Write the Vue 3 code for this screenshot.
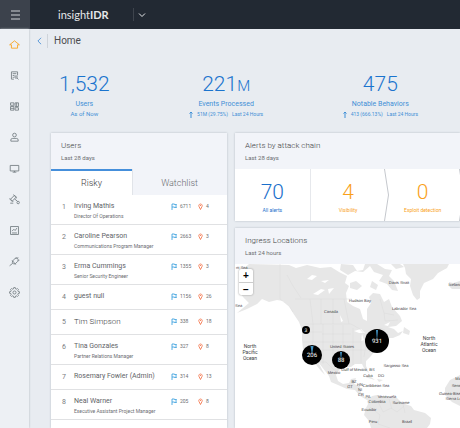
<script setup>
import { ref } from 'vue'

const tab = ref('risky')

const navItems = [
  { label: 'Home', active: true, paths: ['M0 8.500 8 2l8 6.500h-3V14H3V8.500z'] },
  { label: 'Log search', paths: ['M7 14H3V2h10v6', 'M5 5h6M5 8h3M5 11h2', 'M12.500 10.500a2 2 0 1 1-4 0 2 2 0 1 1 4 0', 'M12 12l2.500 2.500'] },
  { label: 'Dashboards', paths: ['M1.500 2H7v4H1.500zM9 2h5.500v6H9zM1.500 8H7v6H1.500zM9 10h5.500v4H9z', 'M2 11h5M11.500 2v6'] },
  { label: 'Users', paths: ['M11 4a3 3 0 1 1-6 0 3 3 0 1 1 6 0', 'M2 14v-2q0-2.500 3-2.500h6q3 0 3 2.500v2z'] },
  { label: 'Assets', paths: ['M1 3h14v9H1z', 'M8 12v2M5 14h6'] },
  { label: 'Investigations', paths: ['M1 8l7-7 3 3-7 7z', 'M6 0l6 6M0 6l6 6', 'M8 7l5 4', 'M16 13a2 2 0 1 1-4 0 2 2 0 1 1 4 0', 'M1 14h5'] },
  { label: 'Reports', paths: ['M1.500 1.500h13v13h-13z', 'M4 9l3-3 2 2 3-4', 'M4 12h8'] },
  { label: 'Data collection', paths: ['M5 7l4-4q3-1 4.500.5T13 8l-4 4q-3 0-4-1T5 7z', 'M4 6l6 7M5 11l-5 4M12 3l2-2M10 3l1-2M14 7l2-1'] },
  { label: 'Settings', paths: ['M6.700 0h2.600l.4 2 1.400.6L12.800 1.500l1.700 1.700-1.100 1.700.6 1.400 2 .4v2.600l-2 .4-.6 1.400 1.100 1.700-1.700 1.700-1.700-1.100-1.400.6-.4 2H6.700l-.4-2-1.400-.6-1.700 1.100-1.700-1.700 1.100-1.700L2 9.700l-2-.4V6.700l2-.4.6-1.400L1.500 3.200l1.700-1.700 1.700 1.100L6.300 2z', 'M10.500 8a2.500 2.500 0 1 1-5 0 2.500 2.500 0 1 1 5 0'] },
]

const stats = [
  { value: '1,532', label: 'Users', note: 'As of Now' },
  { value: '221', unit: 'M', label: 'Events Processed', change: '51M (29.75%)', note: 'Last 24 Hours' },
  { value: '475', label: 'Notable Behaviors', change: '413 (666.13%)', note: 'Last 24 Hours' },
]

const users = [
  { name: 'Irving Mathis', role: 'Director Of Operations', flags: 6711, pins: 4 },
  { name: 'Caroline Pearson', role: 'Communications Program Manager', flags: 2663, pins: 3 },
  { name: 'Erma Cummings', role: 'Senior Security Engineer', flags: 1355, pins: 3 },
  { name: 'guest null', flags: 1156, pins: 26 },
  { name: 'Tim Simpson', flags: 338, pins: 18, large: true },
  { name: 'Tina Gonzales', role: 'Partner Relations Manager', flags: 327, pins: 8 },
  { name: 'Rosemary Fowler (Admin)', flags: 314, pins: 13 },
  { name: 'Neal Warner', role: 'Executive Assistant Project Manager', flags: 205, pins: 8 },
]

const chain = [
  { value: 70, label: 'All alerts', kind: 'all' },
  { value: 4, label: 'Visibility', kind: 'arrow' },
  { value: 0, label: 'Exploit detection', kind: 'arrow' },
]

const places = [
  { x: 331, y: 313, t: 'Canada' },
  { x: 360, y: 302, t: 'Hudson Bay' },
  { x: 399, y: 284, t: 'Davis Strait' },
  { x: 404, y: 310, t: 'Labrador Sea' },
  { x: 455, y: 286, t: 'Iceland' },
  { x: 342, y: 348, t: 'United States' },
  { x: 334, y: 374, t: 'Mexico' },
  { x: 354, y: 371, t: 'Gulf of Mexico' },
  { x: 372, y: 371, t: 'BS' },
  { x: 368, y: 377, t: 'Cuba' },
  { x: 381, y: 377, t: 'DO' },
  { x: 396, y: 367, t: 'Sargasso Sea' },
  { x: 376, y: 387, t: 'Caribbean Sea' },
  { x: 354, y: 383, t: 'BZ' },
  { x: 350, y: 388, t: 'GT' },
  { x: 360, y: 386, t: 'HN' },
  { x: 360, y: 391, t: 'NI' },
  { x: 361, y: 396, t: 'CR' },
  { x: 368, y: 398, t: 'PA' },
  { x: 387, y: 398, t: 'Venezuela' },
  { x: 377, y: 403, t: 'Colombia' },
  { x: 401, y: 404, t: 'Suriname' },
  { x: 369, y: 411, t: 'Ecuador' },
  { x: 373, y: 423, t: 'Peru' },
  { x: 407, y: 423, t: 'Brazil' },
  { x: 459, y: 380, t: 'Mali' },
  { x: 459, y: 387, t: 'Senegal' },
  { x: 452, y: 395, t: 'Guinea-Bissau' },
  { x: 457, y: 400, t: 'Sierra Leone' },
]

const oceans = [
  { x: 250, y: 348, lines: ['North', 'Pacific', 'Ocean'] },
  { x: 429, y: 340, lines: ['North', 'Atlantic', 'Ocean'] },
]

const clusters = [
  { x: 306, y: 330, r: 4, n: 3, size: 5 },
  { x: 312, y: 355, r: 10, n: 206, size: 6, slice: 1.5 },
  { x: 341, y: 360, r: 9, n: 88, size: 6, slice: 1 },
  { x: 377, y: 341, r: 12, n: 931, size: 6, slice: 1 },
]
</script>

<template>
  <div class="app">
    <header class="topbar">
      <button class="menu" aria-label="Menu"><i></i><i></i><i></i></button>
      <span class="brand">insight<b>IDR</b></span>
      <button class="switch" aria-label="Switch product">
        <svg viewBox="0 0 8 6"><path d="M1 1.500l3 3 3-3" /></svg>
      </button>
    </header>

    <div class="body">
      <nav class="side">
        <a v-for="n in navItems" :key="n.label" href="#" :aria-label="n.label" :class="{ active: n.active }">
          <svg viewBox="-1 -1 18 18"><path v-for="p in n.paths" :key="p" :d="p" /></svg>
        </a>
      </nav>

      <main class="main">
        <div class="crumb">
          <a href="#" aria-label="Back"><svg viewBox="0 0 6 10"><path d="M5 1L1 5l4 4" /></svg></a>
          <h1>Home</h1>
        </div>

        <section class="stats">
          <div v-for="s in stats" :key="s.label" class="stat">
            <div class="value">{{ s.value }}<small v-if="s.unit">{{ s.unit }}</small></div>
            <div class="label">{{ s.label }}</div>
            <div class="note" :class="{ plain: !s.change }">
              <template v-if="s.change">
                <svg viewBox="0 0 4 7"><path d="M2 7V1M.5 2.500L2 1l1.500 1.500" /></svg>
                <span>{{ s.change }}</span>
              </template>
              <span>{{ s.note }}</span>
            </div>
          </div>
        </section>

        <div class="columns">
          <section class="card users">
            <div class="head">
              <h2>Users</h2>
              <p>Last 28 days</p>
            </div>
            <div class="tabs">
              <button :class="{ on: tab === 'risky' }" @click="tab = 'risky'">Risky</button>
              <button :class="{ on: tab === 'watch' }" @click="tab = 'watch'">Watchlist</button>
            </div>
            <ol>
              <li v-for="(u, i) in users" :key="u.name" :class="{ single: !u.role }">
                <span class="rank">{{ i + 1 }}</span>
                <div class="who">
                  <div class="name" :class="{ large: u.large }">{{ u.name }}</div>
                  <div v-if="u.role" class="role">{{ u.role }}</div>
                </div>
                <div class="count flag">
                  <svg viewBox="0 0 6 7"><path d="M1 7V1h2.500v.5h2L4.800 3l.7 1.500h-2V4H1" /></svg>{{ u.flags }}
                </div>
                <div class="count pin">
                  <svg viewBox="0 0 5 7"><path d="M2.500 6.500L1 3.500a1.700 1.700 0 1 1 3 0zM2.500 2v1" /></svg>{{ u.pins }}
                </div>
              </li>
            </ol>
          </section>

          <div class="right">
            <section class="card">
              <div class="head">
                <h2>Alerts by attack chain</h2>
                <p>Last 28 days</p>
              </div>
              <div class="chain">
                <div v-for="c in chain" :key="c.label" class="step" :class="c.kind">
                  <strong>{{ c.value }}</strong>
                  <span>{{ c.label }}</span>
                  <svg v-if="c.kind === 'arrow'" class="edge" viewBox="0 0 5 52" preserveAspectRatio="none">
                    <path d="M.5 0l4 26-4 26" />
                  </svg>
                </div>
              </div>
            </section>

            <section class="card ingress">
              <div class="head">
                <h2>Ingress Locations</h2>
                <p>Last 24 hours</p>
              </div>
              <div class="map">
                <svg viewBox="235 264 225 164" preserveAspectRatio="xMinYMin slice" role="img" aria-label="World map">
                  <g class="land">
                    <path d="M249 264L289 265 296 268 307 265 320 268 331 267 339 272 347 276 345 283 349 286 346 293 347 302 353 306 360 309 363 319 367 321 367 309 371 303 369 297 373 293 380 294 384 302 389 299 392 307 400 316 402 321 396 326 388 327 394 329 398 333 403 331 400 335 393 338 388 338 383 343 377 346 374 352 371 356 366 361 366 366 369 373 365 370 362 364 355 364 351 367 344 366 339 370 336 375 338 381 343 384 349 383 351 379 356 378 354 384 360 386 361 393 366 398 372 397 373 399 367 400 360 396 355 390 347 389 338 385 331 382 329 376 322 367 318 362 325 375 321 371 313 361 307 356 303 349 302 340 302 330 299 322 293 313 289 306 283 301 277 300 269 302 262 299 257 304 247 309 237 313 249 303 243 297 240 292 245 288 241 282 245 276 241 271z" />
                    <path d="M367 401L372 396 377 395 382 397 397 398 402 403 411 406 414 410 425 413 431 418 430 424 427 428 371 428 369 421 364 415 366 408 368 404z" />
                    <path d="M403 264L449 264 447 268 438 273 433 279 424 283 420 291 420 298 417 300 413 295 410 286 411 279 406 274 405 268z" />
                    <path d="M341 264l12 1 4 6 6-1 2-6 12 0 8 5 7 1-3 6 5 5 4 10-6-1-5-6-8-3 4-6-9-3-4-6-7 6-8-1-7 4-8-5z" />
                    <path d="M350 283l6-2 6 5-5 4-7-2zM372 281l6 4-2 5-6-3zM391 264l9 0 4 3-8 2z" />
                    <path d="M449 282l4 1 7-2v8l-8 0-3-3zM404 327l6 4-1 4-6-2zM363 376l8 1 4 3-7-2zM377 379l6 1-4 2z" />
                    <path d="M460 375l-10 5-5 8 0 7 7 7 8 4z" />
                  </g>
                  <g class="lakes">
                    <path d="M307 279l5-4 5 1-5 4zM313 294l8-5 4 1-7 5zM321 281l8-1-4 3zM328 289l6-1-5 6zM354 331l7-2 4 4-6 0zM362 334l2 6-3 1zM368 335l4 1-2 3zM340 315l3 6-2 1zM384 325l6-3-2 4z" />
                  </g>
                  <g class="borders">
                    <path d="M280 264v35l9 7 4 6M287 275l6 11 8 12M295 299h57M305 324h46l9 5 6 7 9-2 5-6 5 2M310 299l3 25M321 299v25M333 299v25M344 299l5 25M303 332h19M313 324v18M323 324v40M333 325v33M343 325v37M353 328v37M303 342h58M322 334h29M322 350h46M312 342l5 20M316 362h10l8 8 6 0M361 338v25M367 337l-3 20M369 352l7-7M380 299l4 14 10 2M384 313l1 8 13-1M378 402l5 10 8-4 6 4 7-6M370 407l10 8-2 9 12 4M389 399l3 10M403 404l2 9" />
                  </g>
                  <g class="places">
                    <text v-for="p in places" :key="p.t" :x="p.x" :y="p.y">{{ p.t }}</text>
                    <text x="236" y="269" class="edge-name">nt Sea</text>
                    <text x="235" y="307" class="edge-name">Sea</text>
                  </g>
                  <g class="oceans">
                    <text v-for="o in oceans" :key="o.x" :x="o.x" :y="o.y">
                      <tspan v-for="(l, i) in o.lines" :key="l" :x="o.x" :dy="i ? 6 : 0">{{ l }}</tspan>
                    </text>
                  </g>
                  <g v-for="c in clusters" :key="c.n" class="cluster">
                    <circle :cx="c.x" :cy="c.y" :r="c.r" />
                    <path v-if="c.slice" :d="`M${c.x} ${c.y}l${-c.slice} ${1 - c.r}h${c.slice * 2}z`" />
                    <text :x="c.x" :y="c.y + c.size / 3" :font-size="c.size">{{ c.n }}</text>
                  </g>
                </svg>
                <div class="zoom">
                  <button aria-label="Zoom in">+</button>
                  <button aria-label="Zoom out">−</button>
                </div>
              </div>
            </section>
          </div>
        </div>
      </main>
    </div>
  </div>
</template>

<style>
body { margin: 0; background: #e8ecf1; }
</style>

<style scoped>
* { box-sizing: border-box; }
.app {
  display: flex;
  flex-direction: column;
  height: 100vh;
  overflow: hidden;
  font-family: Roboto, "Liberation Sans", sans-serif;
  color: #5a5c60;
}
h1, h2, p, ol { margin: 0; padding: 0; }
button { border: 0; padding: 0; background: none; font: inherit; color: inherit; cursor: pointer; }
svg { display: block; fill: none; stroke: currentColor; }

.topbar { display: flex; align-items: center; height: 29px; flex: none; background: #222933; color: #e6e8ea; }
.menu { width: 30px; height: 29px; background: #3c424c; display: flex; flex-direction: column; align-items: center; justify-content: center; gap: 2px; }
.menu i { width: 9px; height: 2px; background: #858a91; }
.brand { margin-left: 28px; font: 400 11px/16px Lato, sans-serif; }
.brand b { font-weight: 700; }
.switch { margin-left: 24px; padding-left: 4px; height: 13px; border-left: 1px solid #3e444d; display: flex; align-items: center; }
.switch svg { width: 8px; height: 6px; }

.body { flex: 1; display: flex; min-height: 0; }
.side { width: 29px; flex: none; display: flex; flex-direction: column; gap: 20px; padding-top: 10px; align-items: center; background: #edf0f4; box-shadow: 0 0 2px #aeb4bc; color: #747d82; z-index: 1; }
.side a { color: inherit; }
.side svg { width: 11px; height: 11px; stroke-width: 1.4; }
.side .active { color: #f9a11b; }

.main { flex: 1; min-width: 0; display: flex; flex-direction: column; padding-left: 22px; background: #e8ecf1; }
.crumb { display: flex; align-items: center; height: 24px; margin-left: -14px; }
.crumb a { color: #3a87d2; padding-right: 5px; border-right: 1px solid #cfd4da; height: 14px; display: flex; align-items: center; }
.crumb svg { width: 5px; height: 8px; }
.crumb h1 { font-size: 10px; line-height: 14px; font-weight: 400; color: #4b4d50; margin-left: 6px; }

.stats { display: flex; justify-content: space-between; padding: 18px 42px 15px 8px; color: #3f8fd6; text-align: center; }
.value { height: 27px; font-size: 21px; line-height: 27px; font-weight: 300; color: #1b74ce; }
.value small { font-size: 15px; line-height: 15px; }
.label { font-size: 7px; line-height: 12px; }
.note { font-size: 5px; line-height: 8px; display: flex; gap: 4px; justify-content: center; align-items: center; }
.note.plain { font-size: 6px; }
.note svg { width: 4px; height: 7px; }

.columns { flex: 1; display: flex; gap: 8px; min-height: 0; }
.card { background: #fff; box-shadow: 0 0 2px #b3bac3; overflow: hidden; }
.users { flex: 0 0 176px; }
.head { height: 36px; padding: 7px 10px 0 10px; background: #f2f4f9; }
.head h2 { font-size: 8px; line-height: 12px; font-weight: 300; color: #3c3e42; }
.head p { font-size: 6px; line-height: 12px; color: #6c6e72; }

.tabs { display: flex; height: 26px; background: #f2f4f9; }
.tabs button { flex: 1; font-size: 9px; font-weight: 300; line-height: 24px; color: #6a6c70; border-top: 2px solid transparent; }
.tabs button:first-child { flex: 0 0 81px; }
.tabs button.on { background: #fff; border-top-color: #458fdb; color: #3c3e42; box-shadow: 1px 0 0 #e1e4e9; }

ol { list-style: none; }
li { display: flex; height: 30px; padding: 6px 8px 0 11px; border-bottom: 1px solid #e0e1e3; }
li.single { height: 25px; }
.rank { width: 12px; font-size: 7px; line-height: 12px; color: #7a7c80; }
.who { flex: 1; white-space: nowrap; min-width: 0; }
.name { font-size: 7px; line-height: 11px; color: #626468; }
.name.large { font-size: 8px; font-weight: 300; color: #3c3e42; }
.role { font-size: 5px; line-height: 8px; color: #6c6e72; }
.count { display: flex; gap: 3px; font-size: 5px; line-height: 11px; color: #6c6e72; }
.count svg { margin-top: 2px; height: 7px; stroke-width: .8; }
.flag { width: 27px; }
.flag svg { width: 6px; color: #2f9bdc; }
.pin { width: 21px; }
.pin svg { width: 5px; color: #f26a3d; }

.right { flex: 1; min-width: 0; display: flex; flex-direction: column; gap: 7px; }
.chain { display: flex; height: 52px; }
.step { position: relative; flex: 1; display: flex; flex-direction: column; align-items: center; color: #f9a11b; padding-top: 10px; }
.step.all { color: #1b6fcb; border-right: 1px solid #e6e8ec; }
.step strong { font-size: 21px; line-height: 26px; font-weight: 300; }
.step span { font-size: 5px; line-height: 10px; }
.edge { position: absolute; right: -4px; top: 0; width: 5px; height: 100%; color: #c5c8cd; z-index: 1; }

.ingress { flex: 1; display: flex; flex-direction: column; min-height: 0; }
.ingress .head { flex: none; }
.map { position: relative; flex: 1; min-height: 0; overflow: hidden; }
.map > svg { width: 100%; height: 100%; stroke: none; }
.land { fill: #e7e7e7; }
.lakes { fill: #fff; }
.borders { fill: none; stroke: #dadada; stroke-width: .5; }
.places { fill: #3c3e42; font-size: 4px; text-anchor: middle; font-family: "Liberation Sans Narrow", "Liberation Sans", sans-serif; text-rendering: geometricPrecision; }
.edge-name { text-anchor: start; }
.oceans { fill: #3c3e42; font-size: 5px; text-anchor: middle; }
.cluster { fill: #000; text-anchor: middle; }
.cluster path { fill: #3f8fbf; }
.cluster text { fill: #fff; text-rendering: geometricPrecision; }
.zoom { position: absolute; left: 4px; top: 5px; width: 14px; background: #fff; border-radius: 2px; box-shadow: 0 0 2px #888; }
.zoom button { display: block; width: 100%; height: 13px; font: 700 10px/13px "Liberation Sans", sans-serif; color: #000; }
.zoom button + button { border-top: 1px solid #ccc; }
</style>
